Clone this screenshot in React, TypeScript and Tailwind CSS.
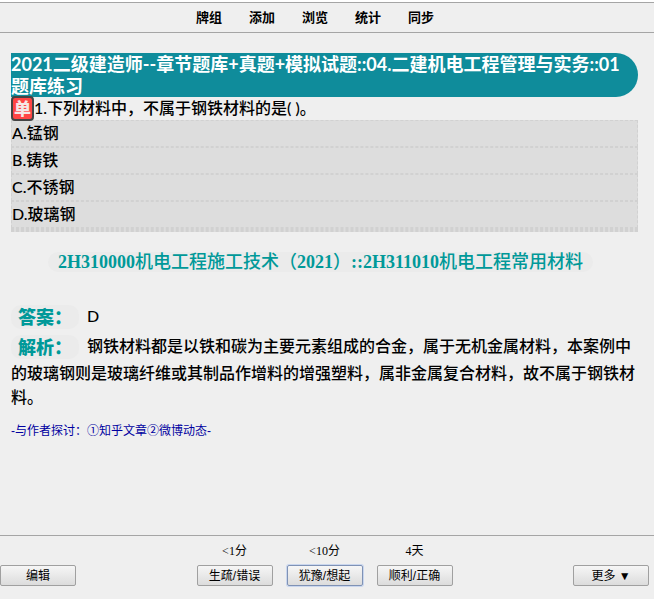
import React from 'react';
import clsx from 'clsx';

const NAV_ITEMS = ['牌组', '添加', '浏览', '统计', '同步'];

// the last two slots are unused by this card and collapse to their borders
const OPTIONS = ['A.锰钢', 'B.铸铁', 'C.不锈钢', 'D.玻璃钢', '', ''];

const ANSWERS = [
  { due: '<1分', label: '生疏/错误', focused: false },
  { due: '<10分', label: '犹豫/想起', focused: true },
  { due: '4天', label: '顺利/正确', focused: false },
];

interface PushButtonProps {
  children: React.ReactNode;
  focused?: boolean;
  describedBy?: string;
}

const PushButton: React.FC<PushButtonProps> = ({ children, focused, describedBy }) => (
  <button
    type="button"
    aria-describedby={describedBy}
    className={clsx(
      'h-[21px] w-[76px] rounded-[2px] border bg-linear-to-b from-[#f6f6f6] to-[#dcdcdc] text-center text-[12px] leading-[18px] whitespace-nowrap text-black',
      focused ? 'border-[#7f92b5] ring-1 ring-[#c9d6ee]' : 'border-[#a0a0a0]'
    )}
  >
    {children}
  </button>
);

const Tag: React.FC<{ children: React.ReactNode }> = ({ children }) => (
  <span className="mr-2 mb-0.5 inline-block rounded-[10px] bg-[#ebebeb] px-[7px] align-middle text-[18px] leading-6 font-black text-[#009999]">
    {children}
  </span>
);

const TopBar: React.FC = () => (
  <header className="border-t-2 border-white">
    <nav className="flex h-[31px] items-center justify-center border-y border-[#a5a5a5] pr-6">
      {NAV_ITEMS.map((item) => (
        <a key={item} href="#" className="w-[53px] text-center text-[13px] leading-5 font-bold text-black">
          {item}
        </a>
      ))}
    </nav>
  </header>
);

const Card: React.FC = () => (
  <main className="flex-1 pt-5 pr-4 pl-[11px] font-['Lato','Noto_Sans_CJK_SC',sans-serif] text-[16px] font-medium">
    <h1 className="rounded-r-full bg-[#0f8c9b] pr-3 text-[18px] leading-[22px] font-bold text-white">
      2021二级建造师--章节题库+真题+模拟试题::04.二建机电工程管理与实务::01题库练习
    </h1>

    <div className="flex h-[23px] items-center">
      <span className="rounded-[4px] border-2 border-[#444444] bg-[#ff4444] px-px text-[17px] leading-[21px] font-black text-[#f5e6e6]">
        单
      </span>
      <p className="pb-0.5 leading-[21px]">1.下列材料中，不属于钢铁材料的是( )。</p>
    </div>

    <ul className="bg-[#dddddd]">
      {OPTIONS.map((option, i) => (
        <li key={i} className={clsx('border border-dashed border-[#d1d1d1] leading-[23px]', option && 'pb-0.5')}>
          {option}
        </li>
      ))}
    </ul>

    <div className="mt-5 flex justify-center pr-2">
      <h2 className="rounded-[10px] bg-[#ebebeb] px-[10px] font-['Liberation_Serif','Noto_Sans_CJK_SC',serif] text-[18px] leading-5 font-bold text-[#009999]">
        2H310000<span className="font-medium">机电工程施工技术（</span>2021
        <span className="font-medium">）</span>::2H311010
        <span className="font-medium">机电工程常用材料</span>
      </h2>
    </div>

    <p className="mt-8 leading-6">
      <Tag>答案：</Tag>D
    </p>
    <p className="mt-[3px] leading-6">
      <Tag>解析：</Tag>
      钢铁材料都是以铁和碳为主要元素组成的合金，属于无机金属材料，本案例中的玻璃钢则是玻璃纤维或其制品作增料的增强塑料，属非金属复合材料，故不属于钢铁材料。
    </p>

    <p className="mt-3 font-['Liberation_Sans','Noto_Sans_CJK_SC',sans-serif] text-[12px] leading-5 font-normal text-[#0000a0]">
      -与作者探讨：<a href="#">①知乎文章</a>
      <a href="#">②微博动态</a>-
    </p>
  </main>
);

const BottomBar: React.FC = () => (
  <footer className="flex items-end justify-between border-t border-[#a5a5a5] pt-[5px] pr-[5px] pb-[13px]">
    <PushButton>编辑</PushButton>
    <div className="flex gap-[14px]">
      {ANSWERS.map((answer, i) => (
        <div key={answer.label} className="flex flex-col items-center gap-1">
          <span id={`due-${i}`} className="font-['Liberation_Serif','Noto_Sans_CJK_SC',serif] text-[12px] leading-5">
            {answer.due}
          </span>
          <PushButton focused={answer.focused} describedBy={`due-${i}`}>
            {answer.label}
          </PushButton>
        </div>
      ))}
    </div>
    <PushButton>更多 ▼</PushButton>
  </footer>
);

export default function App() {
  return (
    <div
      lang="zh-CN"
      className="flex min-h-screen flex-col bg-[#efefef] font-['Liberation_Sans','Noto_Sans_CJK_SC',sans-serif] text-black"
    >
      <TopBar />
      <Card />
      <BottomBar />
    </div>
  );
}
